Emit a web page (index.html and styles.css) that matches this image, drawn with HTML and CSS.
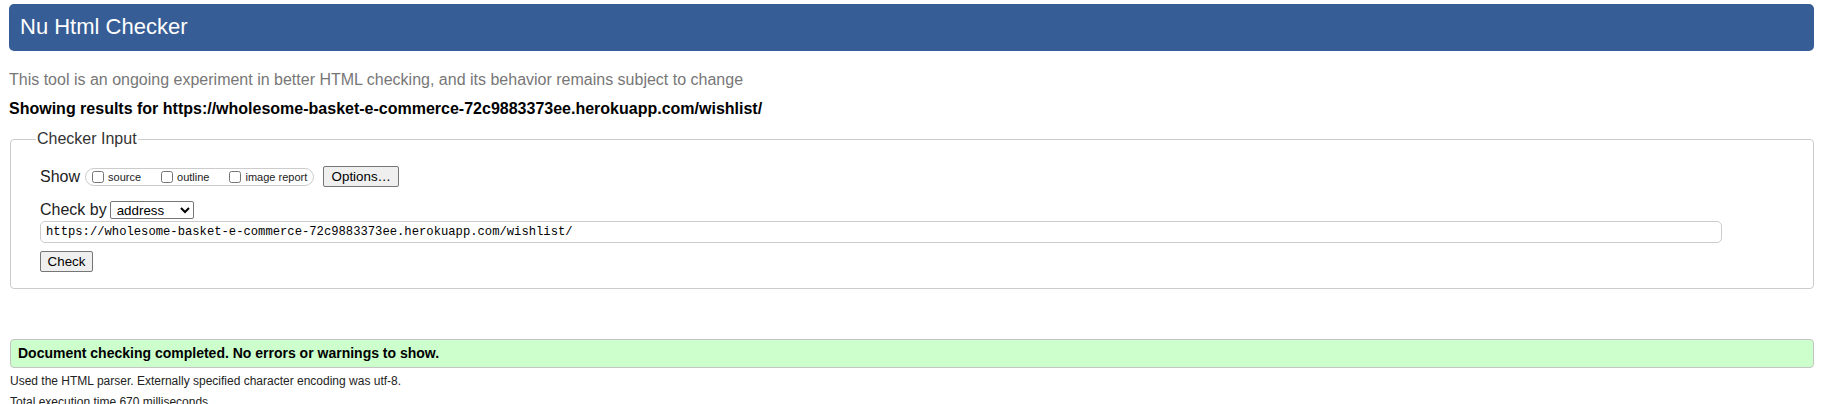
FILE: index.html
```html
<!DOCTYPE html>
<html lang="en">
<head>
<meta charset="utf-8">
<title>Nu Html Checker</title>
<link rel="stylesheet" href="styles.css">
</head>
<body>
<h1 class="title">Nu Html Checker</h1>
<p class="subtitle">This tool is an ongoing experiment in better HTML checking, and its behavior remains subject to change</p>
<p class="results-for">Showing results for https://wholesome-basket-e-commerce-72c9883373ee.herokuapp.com/wishlist/</p>
<form class="checker">
  <fieldset class="checker-input">
    <legend class="checker-legend">Checker Input</legend>
    <div class="show-row">
      <span class="show-label">Show</span>
      <span class="show-group">
        <label class="opt"><input type="checkbox" class="cb"><span>source</span></label>
        <label class="opt"><input type="checkbox" class="cb"><span>outline</span></label>
        <label class="opt"><input type="checkbox" class="cb"><span>image report</span></label>
      </span>
      <button type="button" class="btn options-btn">Options…</button>
    </div>
    <div class="by-row">
      <span class="by-label">Check by</span>
      <select class="by-select"><option>address</option></select>
    </div>
    <input type="text" class="url-input" value="https://wholesome-basket-e-commerce-72c9883373ee.herokuapp.com/wishlist/">
    <div class="submit-row"><button type="button" class="btn check-btn">Check</button></div>
  </fieldset>
</form>
<p class="success">Document checking completed. No errors or warnings to show.</p>
<p class="details">Used the HTML parser. Externally specified character encoding was utf-8.</p>
<p class="details">Total execution time 670 milliseconds.</p>
</body>
</html>
```

FILE: styles.css
```css
html, body {
  background: #fff;
}
body {
  margin: 4px 19px 0 9px;
  font-family: "Liberation Sans", Arial, sans-serif;
  color: #000;
}
.title {
  margin: 0;
  height: 47px;
  line-height: 46px;
  padding: 0 0 0 11px;
  background: #365d95;
  color: #fff;
  font-size: 22px;
  font-weight: normal;
  border-radius: 5px;
}
.subtitle {
  margin: 20px 0 0 0;
  font-size: 16px;
  line-height: 18px;
  color: #777;
}
.results-for {
  margin: 11px 0 0 0;
  font-size: 16px;
  line-height: 18px;
  font-weight: bold;
}
.checker {
  margin: 12px 0 0 0;
}
.checker-input {
  margin: 0 0 0 1px;
  padding: 18px 29px 16px 29px;
  border: 1px solid #ccc;
  border-radius: 4px;
}
.checker-legend {
  padding: 0 1px;
  margin-left: -4px;
  font-size: 16px;
  line-height: 18px;
  color: #333;
}
.show-row {
  display: flex;
  align-items: center;
  height: 21px;
}
.show-label {
  font-size: 16px;
  color: #222;
  margin-right: 5px;
}
.show-group {
  display: flex;
  align-items: center;
  height: 16px;
  padding: 0 6px;
  border: 1px solid #ccc;
  border-radius: 9px;
  gap: 20px;
}
.opt {
  display: flex;
  align-items: center;
  font-size: 11px;
  color: #222;
}
.cb {
  width: 12px;
  height: 12px;
  margin: 0 4px 0 0;
}
.btn {
  font-family: "Liberation Sans", Arial, sans-serif;
  font-size: 13.33px;
  background: #efefef;
  border: 1px solid #767676;
  border-radius: 2px;
  color: #000;
  padding: 1px 6px;
  height: 21px;
}
.options-btn {
  margin-left: 9px;
  width: 76px;
}
.by-row {
  display: flex;
  align-items: center;
  margin-top: 14px;
  height: 18px;
}
.by-label {
  font-size: 16px;
  color: #222;
  margin-right: 3px;
}
.by-select {
  width: 84px;
  height: 18px;
  font-family: "Liberation Sans", Arial, sans-serif;
  font-size: 13.33px;
  border: 1px solid #767676;
  border-radius: 2px;
  background: #fff;
  padding: 0 0 0 2px;
}
.url-input {
  display: block;
  box-sizing: border-box;
  margin-top: 2px;
  width: 96.45%;
  height: 22px;
  border: 1px solid #ccc;
  border-radius: 5px;
  padding: 0 5px;
  font-family: "Liberation Mono", "DejaVu Sans Mono", monospace;
  font-size: 12.2px;
  color: #000;
}
.submit-row {
  margin-top: 8px;
}
.check-btn {
  width: 53px;
}
.success {
  margin: 50px 0 0 1px;
  height: 27px;
  line-height: 27px;
  padding: 0 7px;
  background: #ccffcc;
  border: 1px solid #c4c4c4;
  border-radius: 4px;
  font-size: 14px;
  font-weight: bold;
}
.details {
  margin: 6px 0 0 1px;
  font-size: 12px;
  line-height: 14px;
  color: #222;
}
.details + .details {
  margin-top: 7px;
}
```
